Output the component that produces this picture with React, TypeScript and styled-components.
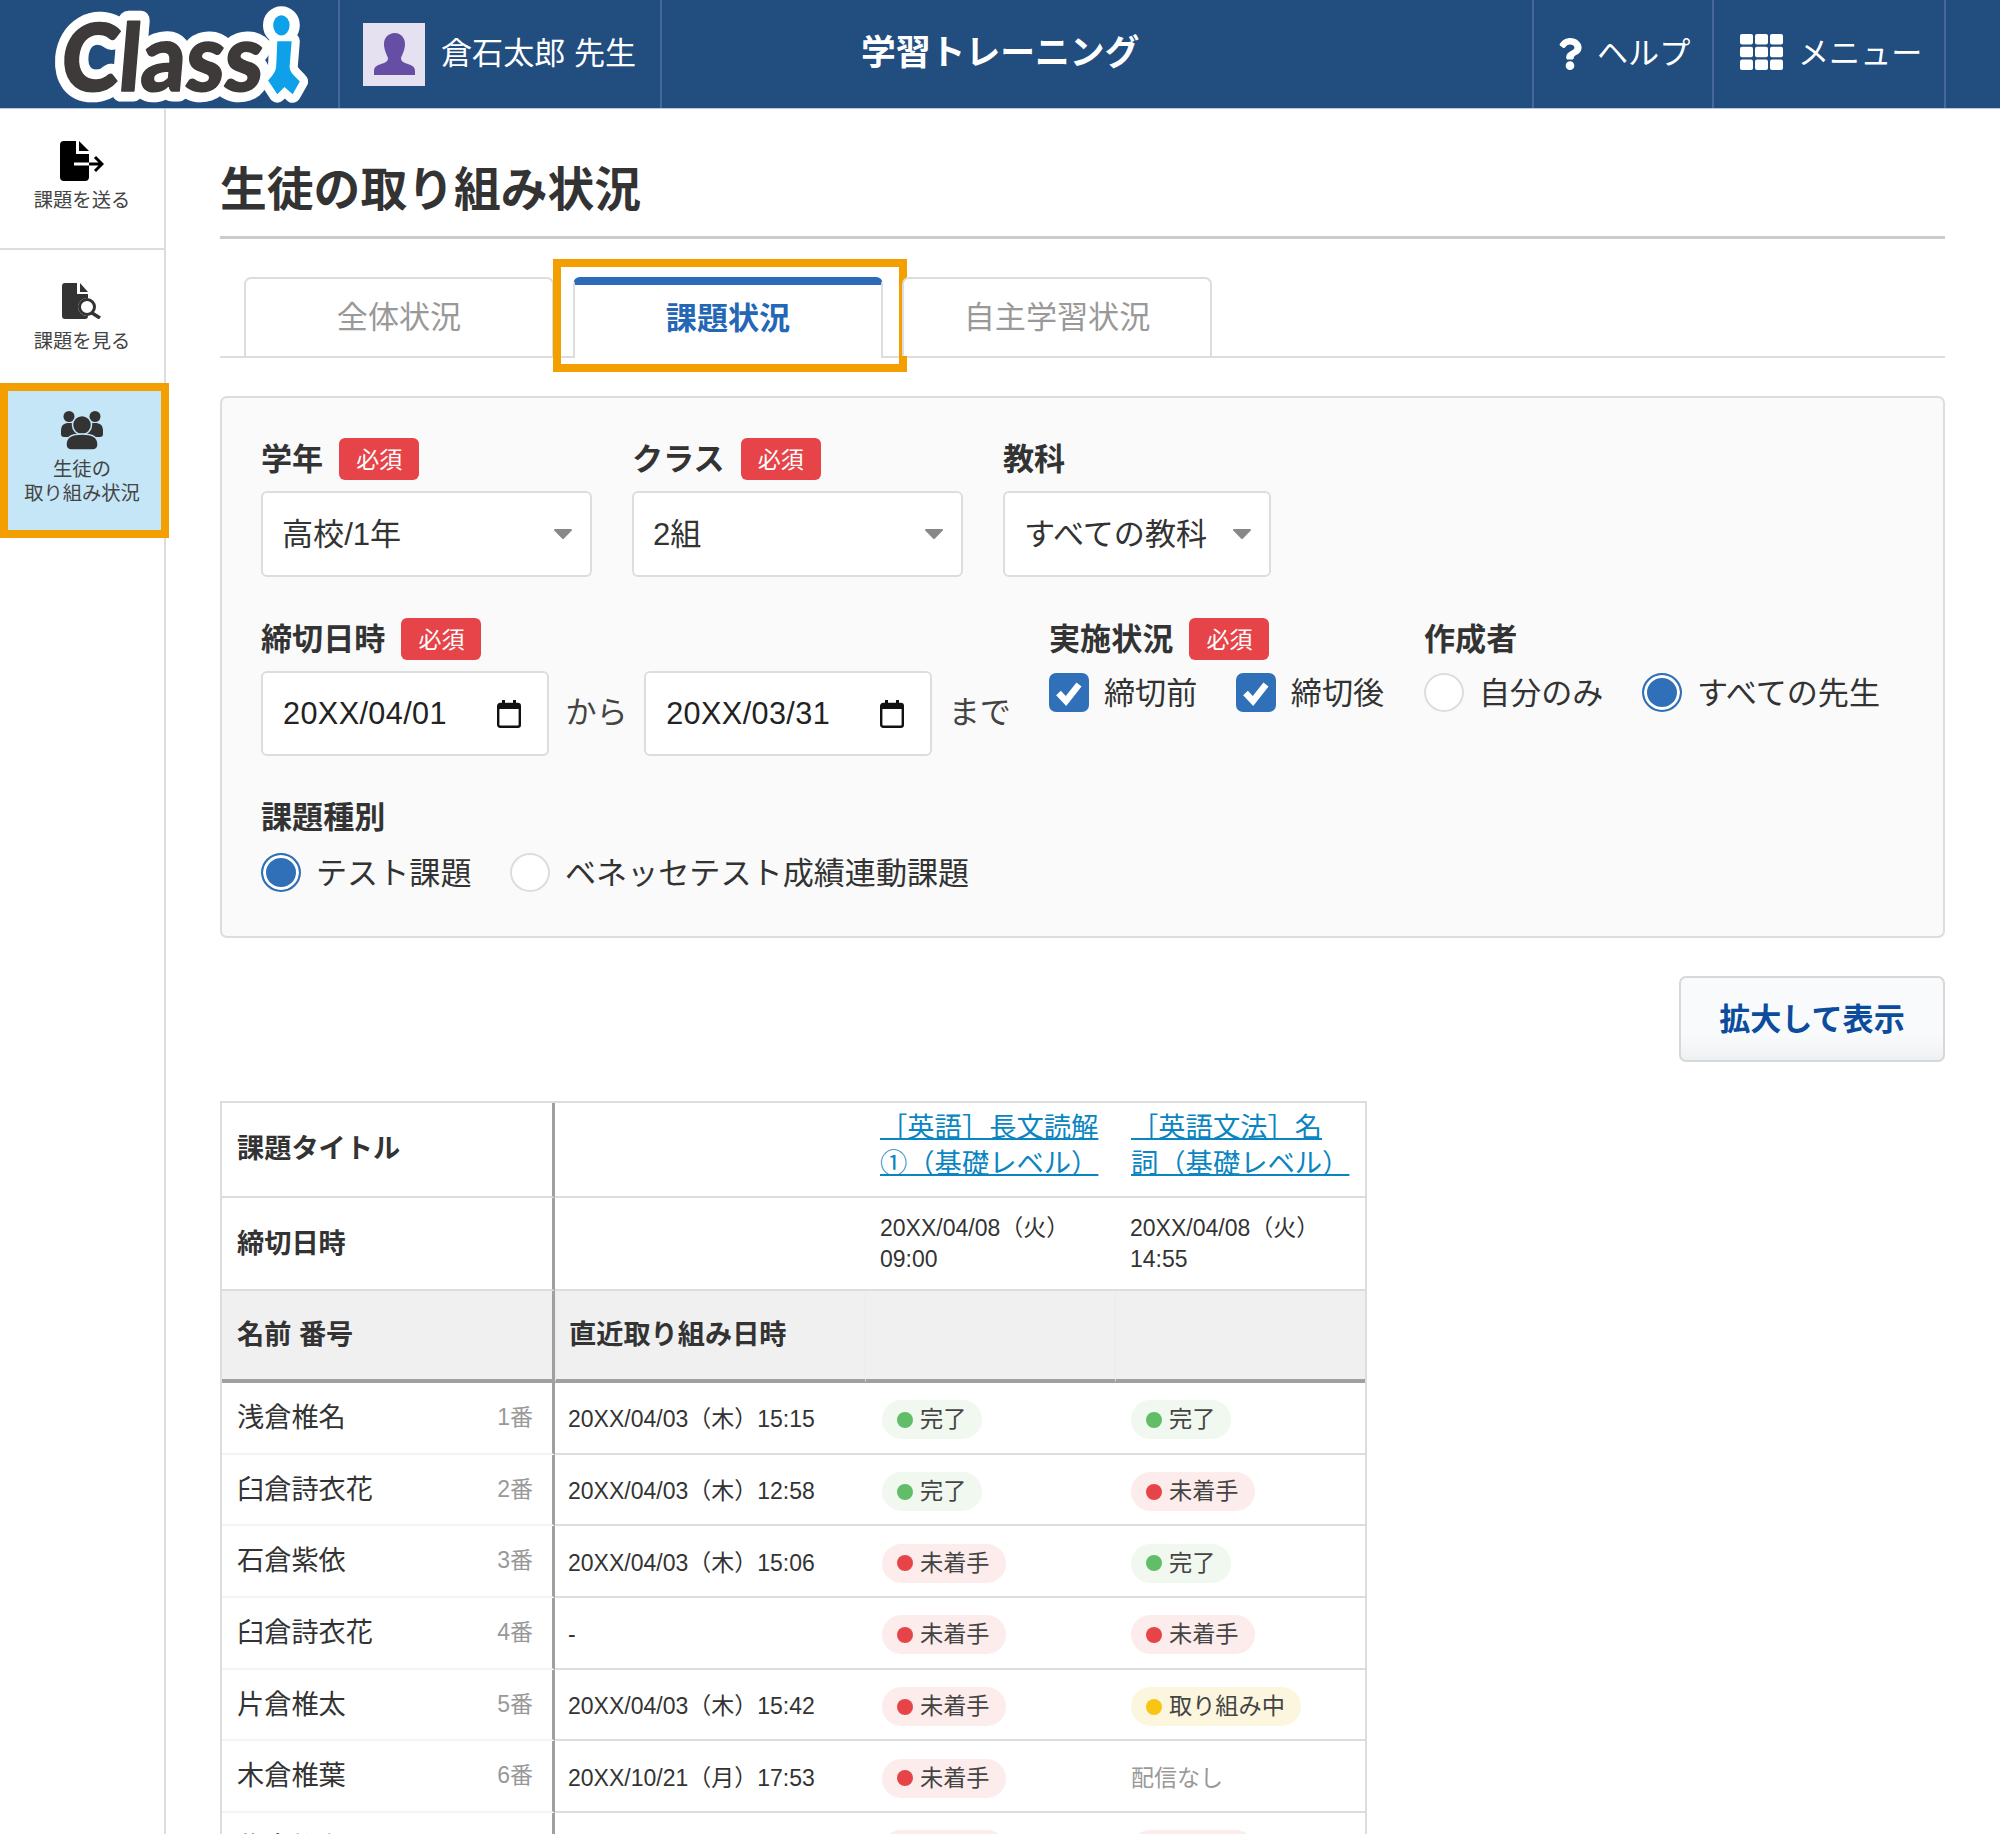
import React from "react";
import styled, { createGlobalStyle } from "styled-components";
import { FaQuestion } from "react-icons/fa";

const GlobalStyle = createGlobalStyle`
  html, body { margin: 0; padding: 0; background: #fff; }
  body { font-family: "Liberation Sans", "Noto Sans CJK JP", sans-serif; color: #333; }
  * { box-sizing: border-box; }
`;

const Page = styled.div`
  width: 2000px;
  height: 1834px;
  overflow: hidden;
  display: flex;
  flex-direction: column;
`;

const Header = styled.header`
  flex: none;
  height: 109px;
  display: flex;
  padding-right: 54px;
  background: #214d7f;
  border-bottom: 1px solid #b9c8d8;
  color: #fff;
`;
const HeaderCell = styled.div<{ $w?: number }>`
  flex: ${(p) => (p.$w ? `0 0 ${p.$w}px` : "1 1 auto")};
  display: flex;
  align-items: center;
  border-right: 2px solid #46699a;
`;
const LogoCell = styled(HeaderCell)`
  padding-left: 46px;
`;
const UserCell = styled(HeaderCell)`
  padding-left: 23px;
  gap: 16px;
`;
const Avatar = styled.div`
  width: 62px;
  height: 63px;
  background: #e6e1f0;
  svg { display: block; }
`;
const HeaderText = styled.span`
  font-size: 31.1px;
  white-space: pre;
  margin-bottom: 8px;
`;
const AppTitle = styled(HeaderCell)`
  padding: 0 0 8px 199px;
  font-size: 34.8px;
  font-weight: 700;
`;
const HelpCell = styled(HeaderCell)`
  padding-left: 23px;
  gap: 14px;
  svg { width: 26px; height: 32px; }
`;
const MenuCell = styled(HeaderCell)`
  padding-left: 26px;
  gap: 15px;
  svg { margin-bottom: 4px; }
`;

const Body = styled.div`
  flex: 1;
  display: flex;
  min-height: 0;
`;
const Sidebar = styled.nav`
  flex: 0 0 166px;
  width: 166px;
  min-width: 0;
  border-right: 2px solid #ddd;
`;
const NavItem = styled.div<{ $h: number; $divider?: boolean; $top: number }>`
  height: ${(p) => p.$h}px;
  padding-top: ${(p) => p.$top}px;
  display: flex;
  flex-direction: column;
  align-items: center;
  border-bottom: ${(p) => (p.$divider ? "2px solid #ddd" : "0")};
`;
const ActiveNavItem = styled(NavItem)`
  position: relative;
  width: 169px;
  padding-right: 5px;
  background: #c5e6f6;
  border: 8px solid #f49f00;
`;
const NavIcon = styled.svg<{ $gap: number }>`
  display: block;
  margin-bottom: ${(p) => p.$gap}px;
`;
const NavLabel = styled.div`
  font-size: 19.3px;
  line-height: 23.5px;
  text-align: center;
  color: #444;
  white-space: nowrap;
`;

const Main = styled.main`
  flex: 1;
  min-width: 0;
  padding: 0 55px 0 54px;
`;
const PageTitle = styled.h1`
  margin: 0;
  height: 130px;
  padding-top: 26px;
  display: flex;
  align-items: center;
  font-size: 46.8px;
  font-weight: 700;
  color: #333;
  border-bottom: 3px solid #ccc;
`;
const Tabs = styled.div`
  margin-top: 38px;
  padding-left: 24px;
  height: 81px;
  display: flex;
  gap: 19px;
  border-bottom: 2px solid #ddd;
`;
const Tab = styled.div<{ $w: number }>`
  position: relative;
  width: ${(p) => p.$w}px;
  height: 79px;
  display: flex;
  align-items: center;
  justify-content: center;
  padding-bottom: 7px;
  background: #fff;
  border: 2px solid #ddd;
  border-bottom: 0;
  border-radius: 7px 7px 0 0;
  font-size: 31.1px;
  color: #999;
`;
const ActiveTab = styled(Tab)`
  height: 81px;
  border-top: 8px solid #2d6ab8;
  padding-bottom: 13px;
  font-weight: 700;
  color: #2467b5;
`;
const TabHighlight = styled.div`
  position: absolute;
  left: -22px;
  right: -26px;
  top: -26px;
  bottom: -14px;
  border: 8px solid #f49f00;
  pointer-events: none;
`;

const Panel = styled.section`
  margin-top: 38px;
  height: 542px;
  padding: 40px 39px 0 39px;
  background: #fafafa;
  border: 2px solid #ddd;
  border-radius: 7px;
`;
const FieldRow = styled.div<{ $gap?: number; $top?: number }>`
  display: flex;
  gap: ${(p) => p.$gap ?? 0}px;
  margin-top: ${(p) => p.$top ?? 0}px;
`;
const Field = styled.div<{ $w?: number }>`
  flex: ${(p) => (p.$w ? `0 0 ${p.$w}px` : "0 1 auto")};
`;
const LabelRow = styled.div`
  height: 42px;
  display: flex;
  align-items: center;
  gap: 16px;
`;
const FieldLabel = styled.span`
  font-size: 31.1px;
  font-weight: 700;
  color: #333;
  margin-bottom: 5px;
`;
const Required = styled.span`
  width: 80px;
  height: 42px;
  display: flex;
  align-items: center;
  justify-content: center;
  padding-bottom: 2px;
  background: #e64448;
  border-radius: 6px;
  color: #fff;
  font-size: 23px;
`;
const SelectBox = styled.div<{ $w: number }>`
  margin-top: 11px;
  width: ${(p) => p.$w}px;
  height: 86px;
  display: flex;
  align-items: center;
  justify-content: space-between;
  padding: 0 18px 0 19px;
  background: #fff;
  border: 2px solid #ddd;
  border-radius: 6px;
  font-size: 31.1px;
  color: #333;
  span { margin-bottom: 5px; }
`;
const DateRow = styled.div`
  margin-top: 11px;
  display: flex;
  align-items: center;
  gap: 16.5px;
`;
const DateInput = styled.div`
  width: 288px;
  height: 85px;
  display: flex;
  align-items: center;
  justify-content: space-between;
  padding: 0 26px 0 20px;
  background: #fff;
  border: 2px solid #ddd;
  border-radius: 6px;
  font-size: 30.6px;
  letter-spacing: 0.4px;
  color: #222;
  svg { display: block; }
`;
const DateWord = styled.span`
  font-size: 31.1px;
  color: #444;
  margin-bottom: 9px;
`;
const OptionRow = styled.div<{ $top: number }>`
  display: flex;
  gap: 38.5px;
  margin-top: ${(p) => p.$top}px;
`;
const Option = styled.label`
  display: flex;
  align-items: center;
  gap: 15px;
  font-size: 31.1px;
  color: #333;
  height: 39px;
  white-space: nowrap;
`;
const OptionText = styled.span`
  margin-bottom: 5px;
`;
const CheckBox = styled.span`
  flex: none;
  width: 40px;
  height: 39px;
  background: #3070b8;
  border-radius: 7px;
  svg { display: block; }
`;
const Radio = styled.span<{ $on?: boolean }>`
  flex: none;
  width: 40px;
  height: 39px;
  border-radius: 50%;
  background: ${(p) => (p.$on ? "#3070b8" : "#fff")};
  border: 2px solid ${(p) => (p.$on ? "#3070b8" : "#ddd")};
  box-shadow: ${(p) => (p.$on ? "inset 0 0 0 3px #fff" : "none")};
`;

const ButtonRow = styled.div`
  margin-top: 38px;
  display: flex;
  justify-content: flex-end;
`;
const ExpandButton = styled.button`
  width: 266px;
  height: 86px;
  padding: 0 0 5px;
  background: linear-gradient(#f9fafc 70%, #eef1f3);
  border: 2px solid #d8d8d8;
  border-radius: 7px;
  font-family: inherit;
  font-size: 31.1px;
  font-weight: 700;
  color: #0b4c9c;
`;

const Table = styled.table`
  margin-top: 39px;
  width: 1147px;
  table-layout: fixed;
  border-collapse: separate;
  border-spacing: 0;
  border-top: 2px solid #ddd;
  border-left: 2px solid #ddd;
  border-right: 2px solid #ddd;
  font-size: 27.2px;
  color: #333;
`;
const NameCol = styled.td`
  padding: 0 19px 6px 15px;
  border-right: 3px solid #a0a0a0;
  border-bottom: 2px solid #f4f4f4;
`;
const HeadNameCol = styled(NameCol)<{ $h: number; $pb: number }>`
  height: ${(p) => p.$h}px;
  padding-bottom: ${(p) => p.$pb}px;
  font-weight: 700;
  border-bottom: 2px solid #ddd;
`;
const SortHeadName = styled(HeadNameCol)`
  background: #f0f0f0;
  border-bottom: 4px solid #a0a0a0;
`;
const BodyCell = styled.td<{ $pad?: number }>`
  height: 71.7px;
  padding: 4px 0 0 ${(p) => p.$pad ?? 15}px;
  border-bottom: 2px solid #ddd;
  font-size: 23px;
  line-height: 31px;
`;
const HeadCell = styled(BodyCell)`
  height: auto;
  padding-top: 0;
`;
const LinkCell = styled(HeadCell)`
  padding-bottom: 7px;
`;
const GreyCell = styled.td`
  padding: 0 0 6px 13px;
  background: #f0f0f0;
  border-bottom: 4px solid #a0a0a0;
  border-left: 1px solid #ebebeb;
  font-weight: 700;
`;
const TaskLink = styled.a`
  color: #0a85c2;
  text-decoration: underline;
  text-decoration-thickness: 2px;
  font-size: 27.3px;
  line-height: 36px;
`;
const NameLine = styled.div`
  display: flex;
  align-items: center;
  justify-content: space-between;
`;
const StudentNo = styled.span`
  font-size: 23px;
  color: #999;
`;
const Badge = styled.span<{ $bg: string; $dot: string }>`
  display: inline-flex;
  align-items: center;
  gap: 7px;
  height: 39px;
  padding: 0 16px 0 15px;
  border-radius: 20px;
  background: ${(p) => p.$bg};
  color: #444;
  font-size: 23.2px;
  vertical-align: middle;
  &::before {
    content: "";
    width: 16px;
    height: 16px;
    border-radius: 50%;
    background: ${(p) => p.$dot};
  }
`;
const NoDelivery = styled.span`
  color: #999;
`;

const Logo = () => (
  <svg width="262" height="103" viewBox="0 0 256 97" preserveAspectRatio="none" aria-label="Classi">
    <path d="M226 36H240L238 60C238 66 245 70 248 74L241 86L233 79L226 86L217 73C222 68 225 64 225 58Z" fill="#fff" stroke="#fff" strokeWidth="16" strokeLinejoin="round" />
    <circle cx="230" cy="21" r="10" fill="#fff" stroke="#fff" strokeWidth="16" />
    <g transform="translate(13 83) skewX(-5)">
      <text x="0" y="0" textLength="197" lengthAdjust="spacingAndGlyphs" fontFamily="Lato, 'Liberation Sans', sans-serif" fontWeight="900" fontSize="88" fill="#3e3a39" stroke="#fff" strokeWidth="20" strokeLinejoin="round" paintOrder="stroke">Class</text>
      <text x="0" y="0" textLength="197" lengthAdjust="spacingAndGlyphs" fontFamily="Lato, 'Liberation Sans', sans-serif" fontWeight="900" fontSize="88" fill="#3e3a39" stroke="#3e3a39" strokeWidth="1.5" strokeLinejoin="round">Class</text>
    </g>
    <path d="M226 36H240L238 60C238 66 245 70 248 74L241 86L233 79L226 86L217 73C222 68 225 64 225 58Z" fill="#0ea1ea" />
    <ellipse cx="230" cy="21" rx="8" ry="9.5" fill="#0ea1ea" />
  </svg>
);

const SendIcon = () => (
  <NavIcon $gap={8} width="44" height="40" viewBox="0 0 44 40">
    <path d="M4 0H16V13H29V36a4 4 0 0 1-4 4H4a4 4 0 0 1-4-4V4a4 4 0 0 1 4-4Z" fill="#000" />
    <path d="M19 0L29 10H19Z" fill="#000" />
    <path d="M14 23H29" stroke="#fff" strokeWidth="3" />
    <path d="M29 23H41M35 16L42 23L35 30" stroke="#000" strokeWidth="3" fill="none" />
  </NavIcon>
);
const ViewIcon = () => (
  <NavIcon $gap={11} width="40" height="36" viewBox="0 0 40 36">
    <path d="M3 0H15V11H26V33a3 3 0 0 1-3 3H3a3 3 0 0 1-3-3V3a3 3 0 0 1 3-3Z" fill="#333" />
    <path d="M18 0L26 9H18Z" fill="#333" />
    <circle cx="25" cy="24" r="9" fill="#fff" />
    <circle cx="25" cy="24" r="7.5" fill="none" stroke="#333" strokeWidth="3" />
    <path d="M30 30L38 35" stroke="#333" strokeWidth="3.5" />
  </NavIcon>
);
const PeopleIcon = () => (
  <NavIcon $gap={8} width="42" height="39" viewBox="0 0 42 39">
    <circle cx="8" cy="5.5" r="5.5" fill="#333" />
    <circle cx="34" cy="5.5" r="5.5" fill="#333" />
    <path d="M0 20c0-6 3-8 8-8s8 2 8 8v6H3a3 3 0 0 1-3-3Z" fill="#333" />
    <path d="M42 20c0-6-3-8-8-8s-8 2-8 8v6h13a3 3 0 0 0 3-3Z" fill="#333" />
    <circle cx="21" cy="14" r="9.5" fill="#333" stroke="#c5e6f6" strokeWidth="1.5" />
    <path d="M5 33c0-7 6-10 16-10s16 3 16 10v1a5 5 0 0 1-5 5H10a5 5 0 0 1-5-5Z" fill="#333" stroke="#c5e6f6" strokeWidth="1.5" />
  </NavIcon>
);
const GridIcon = () => (
  <svg width="43" height="36" viewBox="0 0 43 36">
    {[0, 1, 2].flatMap((r) =>
      [0, 1, 2].map((c) => (
        <rect key={`${r}-${c}`} x={c * 15} y={r * 12.7} width="13" height="10.6" rx="2" fill="#fff" />
      ))
    )}
  </svg>
);
const CaretIcon = () => (
  <svg width="18" height="10" viewBox="0 0 18 10">
    <path d="M1 0H17a1 1 0 0 1 .8 1.6L10 9.4a1.4 1.4 0 0 1-2 0L.2 1.6A1 1 0 0 1 1 0Z" fill="#888" />
  </svg>
);
const CalendarIcon = () => (
  <svg width="24" height="28" viewBox="0 0 24 28">
    <rect x="5" y="0" width="3" height="6" fill="#111" />
    <rect x="16" y="0" width="3" height="6" fill="#111" />
    <rect x="1.2" y="4" width="21.6" height="22.8" rx="2" fill="none" stroke="#111" strokeWidth="2.4" />
    <rect x="1" y="4" width="22" height="5" fill="#111" />
  </svg>
);
const CheckIcon = () => (
  <svg width="40" height="39" viewBox="0 0 40 39">
    <path d="M9.5 20L17 28L30 11.5" fill="none" stroke="#fff" strokeWidth="6.5" />
  </svg>
);

type Status = "done" | "todo" | "doing" | "none";
const StatusBadge = ({ s }: { s: Status }) => {
  if (s === "done") return <Badge $bg="#f0f8f0" $dot="#62bd69">完了</Badge>;
  if (s === "todo") return <Badge $bg="#fcecec" $dot="#e64448">未着手</Badge>;
  if (s === "doing") return <Badge $bg="#fdf6df" $dot="#f9c513">取り組み中</Badge>;
  return <NoDelivery>配信なし</NoDelivery>;
};

const students: { name: string; no: string; date: string; a: Status; b: Status }[] = [
  { name: "浅倉椎名", no: "1番", date: "20XX/04/03（木）15:15", a: "done", b: "done" },
  { name: "臼倉詩衣花", no: "2番", date: "20XX/04/03（木）12:58", a: "done", b: "todo" },
  { name: "石倉紫依", no: "3番", date: "20XX/04/03（木）15:06", a: "todo", b: "done" },
  { name: "臼倉詩衣花", no: "4番", date: "-", a: "todo", b: "todo" },
  { name: "片倉椎太", no: "5番", date: "20XX/04/03（木）15:42", a: "todo", b: "doing" },
  { name: "木倉椎葉", no: "6番", date: "20XX/10/21（月）17:53", a: "todo", b: "none" },
  { name: "柴倉椎名", no: "7番", date: "20XX/04/03（木）15:20", a: "todo", b: "todo" },
];

export default function App() {
  return (
    <Page>
      <GlobalStyle />
      <Header>
        <LogoCell $w={340}><Logo /></LogoCell>
        <UserCell $w={322}>
          <Avatar>
            <svg width="62" height="63" viewBox="0 0 62 63">
              <path d="M32 10c-7 0-11 5-11 11 0 6 3 11 4 14 0 2-1 4-4 5-6 2-10 3-10 8v4H52v-4c0-5-4-6-10-8-3-1-4-3-4-5 1-3 4-8 4-14 0-6-4-11-10-11Z" fill="#654ea3" />
            </svg>
          </Avatar>
          <HeaderText>倉石太郎 先生</HeaderText>
        </UserCell>
        <AppTitle>学習トレーニング</AppTitle>
        <HelpCell $w={180}><FaQuestion /><HeaderText>ヘルプ</HeaderText></HelpCell>
        <MenuCell $w={232}><GridIcon /><HeaderText>メニュー</HeaderText></MenuCell>
      </Header>
      <Body>
        <Sidebar>
          <NavItem $h={141} $top={32} $divider><SendIcon /><NavLabel>課題を送る</NavLabel></NavItem>
          <NavItem $h={133} $top={33}><ViewIcon /><NavLabel>課題を見る</NavLabel></NavItem>
          <ActiveNavItem $h={155} $top={20}>
            <PeopleIcon />
            <NavLabel>生徒の<br />取り組み状況</NavLabel>
          </ActiveNavItem>
        </Sidebar>
        <Main>
          <PageTitle>生徒の取り組み状況</PageTitle>
          <Tabs>
            <Tab $w={310}>全体状況</Tab>
            <ActiveTab $w={310}>課題状況<TabHighlight /></ActiveTab>
            <Tab $w={310}>自主学習状況</Tab>
          </Tabs>
          <Panel>
            <FieldRow $gap={40}>
              <Field>
                <LabelRow><FieldLabel>学年</FieldLabel><Required>必須</Required></LabelRow>
                <SelectBox $w={331}><span>高校/1年</span><CaretIcon /></SelectBox>
              </Field>
              <Field>
                <LabelRow><FieldLabel>クラス</FieldLabel><Required>必須</Required></LabelRow>
                <SelectBox $w={331}><span>2組</span><CaretIcon /></SelectBox>
              </Field>
              <Field>
                <LabelRow><FieldLabel>教科</FieldLabel></LabelRow>
                <SelectBox $w={268}><span>すべての教科</span><CaretIcon /></SelectBox>
              </Field>
            </FieldRow>
            <FieldRow $top={41}>
              <Field $w={788}>
                <LabelRow><FieldLabel>締切日時</FieldLabel><Required>必須</Required></LabelRow>
                <DateRow>
                  <DateInput>20XX/04/01<CalendarIcon /></DateInput>
                  <DateWord>から</DateWord>
                  <DateInput>20XX/03/31<CalendarIcon /></DateInput>
                  <DateWord>まで</DateWord>
                </DateRow>
              </Field>
              <Field $w={375}>
                <LabelRow><FieldLabel>実施状況</FieldLabel><Required>必須</Required></LabelRow>
                <OptionRow $top={13}>
                  <Option><CheckBox><CheckIcon /></CheckBox><OptionText>締切前</OptionText></Option>
                  <Option><CheckBox><CheckIcon /></CheckBox><OptionText>締切後</OptionText></Option>
                </OptionRow>
              </Field>
              <Field>
                <LabelRow><FieldLabel>作成者</FieldLabel></LabelRow>
                <OptionRow $top={13}>
                  <Option><Radio /><OptionText>自分のみ</OptionText></Option>
                  <Option><Radio $on /><OptionText>すべての先生</OptionText></Option>
                </OptionRow>
              </Field>
            </FieldRow>
            <FieldRow $top={40}>
              <Field>
                <LabelRow><FieldLabel>課題種別</FieldLabel></LabelRow>
                <OptionRow $top={15}>
                  <Option><Radio $on /><OptionText>テスト課題</OptionText></Option>
                  <Option><Radio /><OptionText>ベネッセテスト成績連動課題</OptionText></Option>
                </OptionRow>
              </Field>
            </FieldRow>
          </Panel>
          <ButtonRow><ExpandButton>拡大して表示</ExpandButton></ButtonRow>
          <Table>
            <colgroup>
              <col style={{ width: 333 }} />
              <col style={{ width: 310 }} />
              <col style={{ width: 250 }} />
              <col />
            </colgroup>
            <tbody>
              <tr>
                <HeadNameCol $h={95} $pb={8}>課題タイトル</HeadNameCol>
                <HeadCell />
                <LinkCell><TaskLink href="#">［英語］長文読解<br />①（基礎レベル）</TaskLink></LinkCell>
                <LinkCell $pad={16}><TaskLink href="#">［英語文法］名<br />詞（基礎レベル）</TaskLink></LinkCell>
              </tr>
              <tr>
                <HeadNameCol $h={93} $pb={5}>締切日時</HeadNameCol>
                <HeadCell />
                <HeadCell>20XX/04/08（火）<br />09:00</HeadCell>
                <HeadCell $pad={15}>20XX/04/08（火）<br />14:55</HeadCell>
              </tr>
              <tr>
                <SortHeadName $h={92} $pb={6}>名前 番号</SortHeadName>
                <GreyCell>直近取り組み日時</GreyCell>
                <GreyCell />
                <GreyCell />
              </tr>
              {students.map((st) => (
                <tr key={st.no}>
                  <NameCol>
                    <NameLine>{st.name}<StudentNo>{st.no}</StudentNo></NameLine>
                  </NameCol>
                  <BodyCell $pad={13}>{st.date}</BodyCell>
                  <BodyCell $pad={17}><StatusBadge s={st.a} /></BodyCell>
                  <BodyCell $pad={16}><StatusBadge s={st.b} /></BodyCell>
                </tr>
              ))}
            </tbody>
          </Table>
        </Main>
      </Body>
    </Page>
  );
}
